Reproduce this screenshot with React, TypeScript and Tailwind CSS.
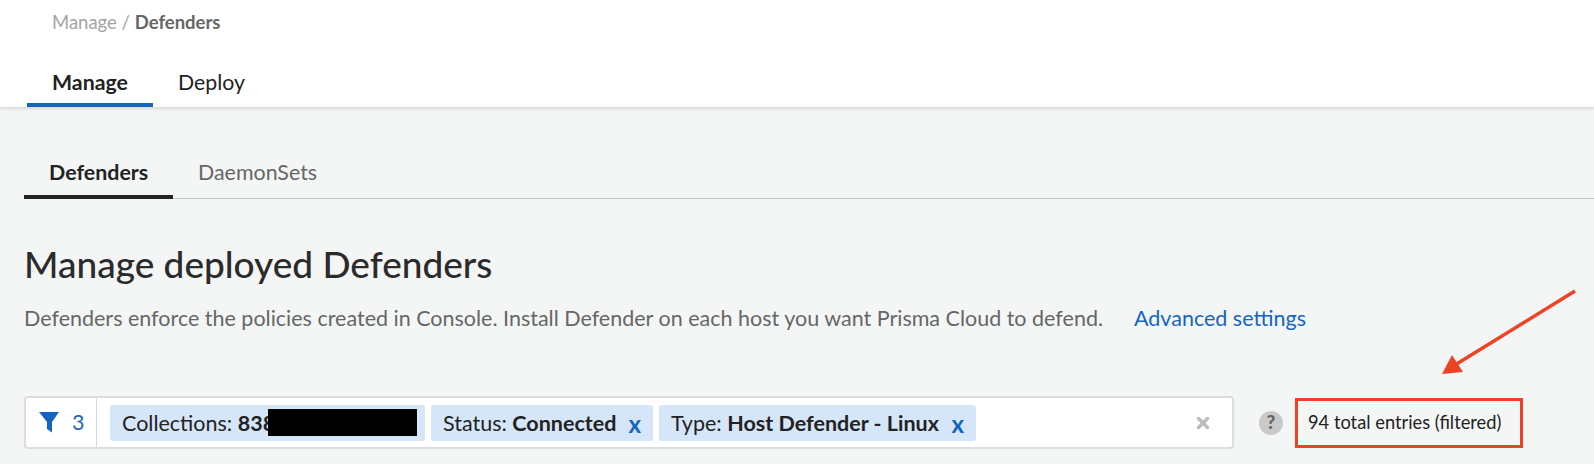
import { X } from "lucide-react";

const Chip = ({ label, value, width }: { label: string; value: string; width: string }) => (
  <div className={`flex h-9 items-center justify-between rounded-[3px] bg-[#d6e6f9] pl-3 pr-3 pt-[2px] text-[21.5px] text-[#222] ${width}`}>
    <span className="whitespace-nowrap">
      {label} <span className="font-bold">{value}</span>
    </span>
    <span className="text-[24px] font-bold leading-none text-[#1565c0]">x</span>
  </div>
);

export default function App() {
  return (
    <div className="relative h-[464px] w-[1594px] overflow-hidden bg-[#f4f6f6] font-['Lato',sans-serif]">
      <header className="h-[108px] border-b border-[#dcdede] bg-white shadow-[0_1px_3px_rgba(0,0,0,0.12)]">
        <div className="pl-[52px] pt-[11px] text-[18.5px] leading-[22px] text-[#a3a5a5]">
          Manage / <span className="font-bold text-[#666]">Defenders</span>
        </div>
        <nav className="ml-[27px] mt-[35px] flex text-[21.3px] leading-[28px]">
          <div className="h-[39px] w-[126px] border-b-4 border-[#1565c0] pl-[25px] font-bold text-[#222]">Manage</div>
          <div className="pl-[25px] text-[#222]">Deploy</div>
        </nav>
      </header>

      <main className="pl-6">
        <div className="mt-[50px] flex h-[41px] border-b border-[#c4c6c6] text-[21.4px] leading-[28px]">
          <div className="h-[41px] w-[149px] border-b-4 border-[#222] pl-[25px] font-bold text-[#222]">Defenders</div>
          <div className="pl-[25px] text-[#666]">DaemonSets</div>
        </div>

        <h1 className="mt-[42px] text-[37px] font-medium leading-[46px] text-[#2b2b2b]">Manage deployed Defenders</h1>

        <div className="mt-[17px] flex text-[21.5px] leading-[28px]">
          <p className="w-[1110px] whitespace-nowrap text-[#666]">
            Defenders enforce the policies created in Console. Install Defender on each host you want Prisma Cloud to defend.
          </p>
          <a className="text-[#1565c0]">Advanced settings</a>
        </div>

        <div className="mt-[64px] flex items-center">
          <div className="flex h-[53px] w-[1210px] items-center rounded-[4px] border-2 border-[#dcdede] bg-white">
            <div className="flex h-full w-[71px] items-center border-r border-[#d8dada] pl-[13px] text-[#1565c0]">
              <svg width="20" height="21" viewBox="0 0 20 21" fill="currentColor">
                <path d="M0 0 H20 L13 10 V20.5 L8 17 V10 Z" />
              </svg>
              <span className="ml-[13px] text-[21.5px]">3</span>
            </div>
            <div className="flex flex-1 items-center gap-[6px] pl-[13px]">
              <div className="relative">
                <Chip label="Collections:" value="838" width="w-[315px]" />
                <div className="absolute left-[158px] top-[4px] h-[27px] w-[149px] bg-black" />
              </div>
              <Chip label="Status:" value="Connected" width="w-[222px]" />
              <Chip label="Type:" value="Host Defender - Linux" width="w-[317px]" />
            </div>
            <X className="mr-[20px] h-[18px] w-[18px] text-[#bcbcbc]" strokeWidth={4.5} />
          </div>

          <div className="ml-[25px] flex h-6 w-6 items-center justify-center rounded-full bg-[#c9c9c9] text-[19px] font-black text-[#666]">
            ?
          </div>

          <div className="ml-3 flex h-[50px] w-[228px] items-center whitespace-nowrap border-[3.5px] border-[#ee4225] pl-[10px] text-[18.3px] text-[#222]">
            94 total entries (filtered)
          </div>
        </div>
      </main>

      {/* red annotation arrow */}
      <svg className="absolute left-[1430px] top-[280px]" width="160" height="110" viewBox="0 0 160 110">
        <path d="M145 11 L25 85" stroke="#ee4225" strokeWidth="3.5" fill="none" />
        <path d="M12 94 L22 75 L33 92 Z" fill="#ee4225" />
      </svg>
    </div>
  );
}
